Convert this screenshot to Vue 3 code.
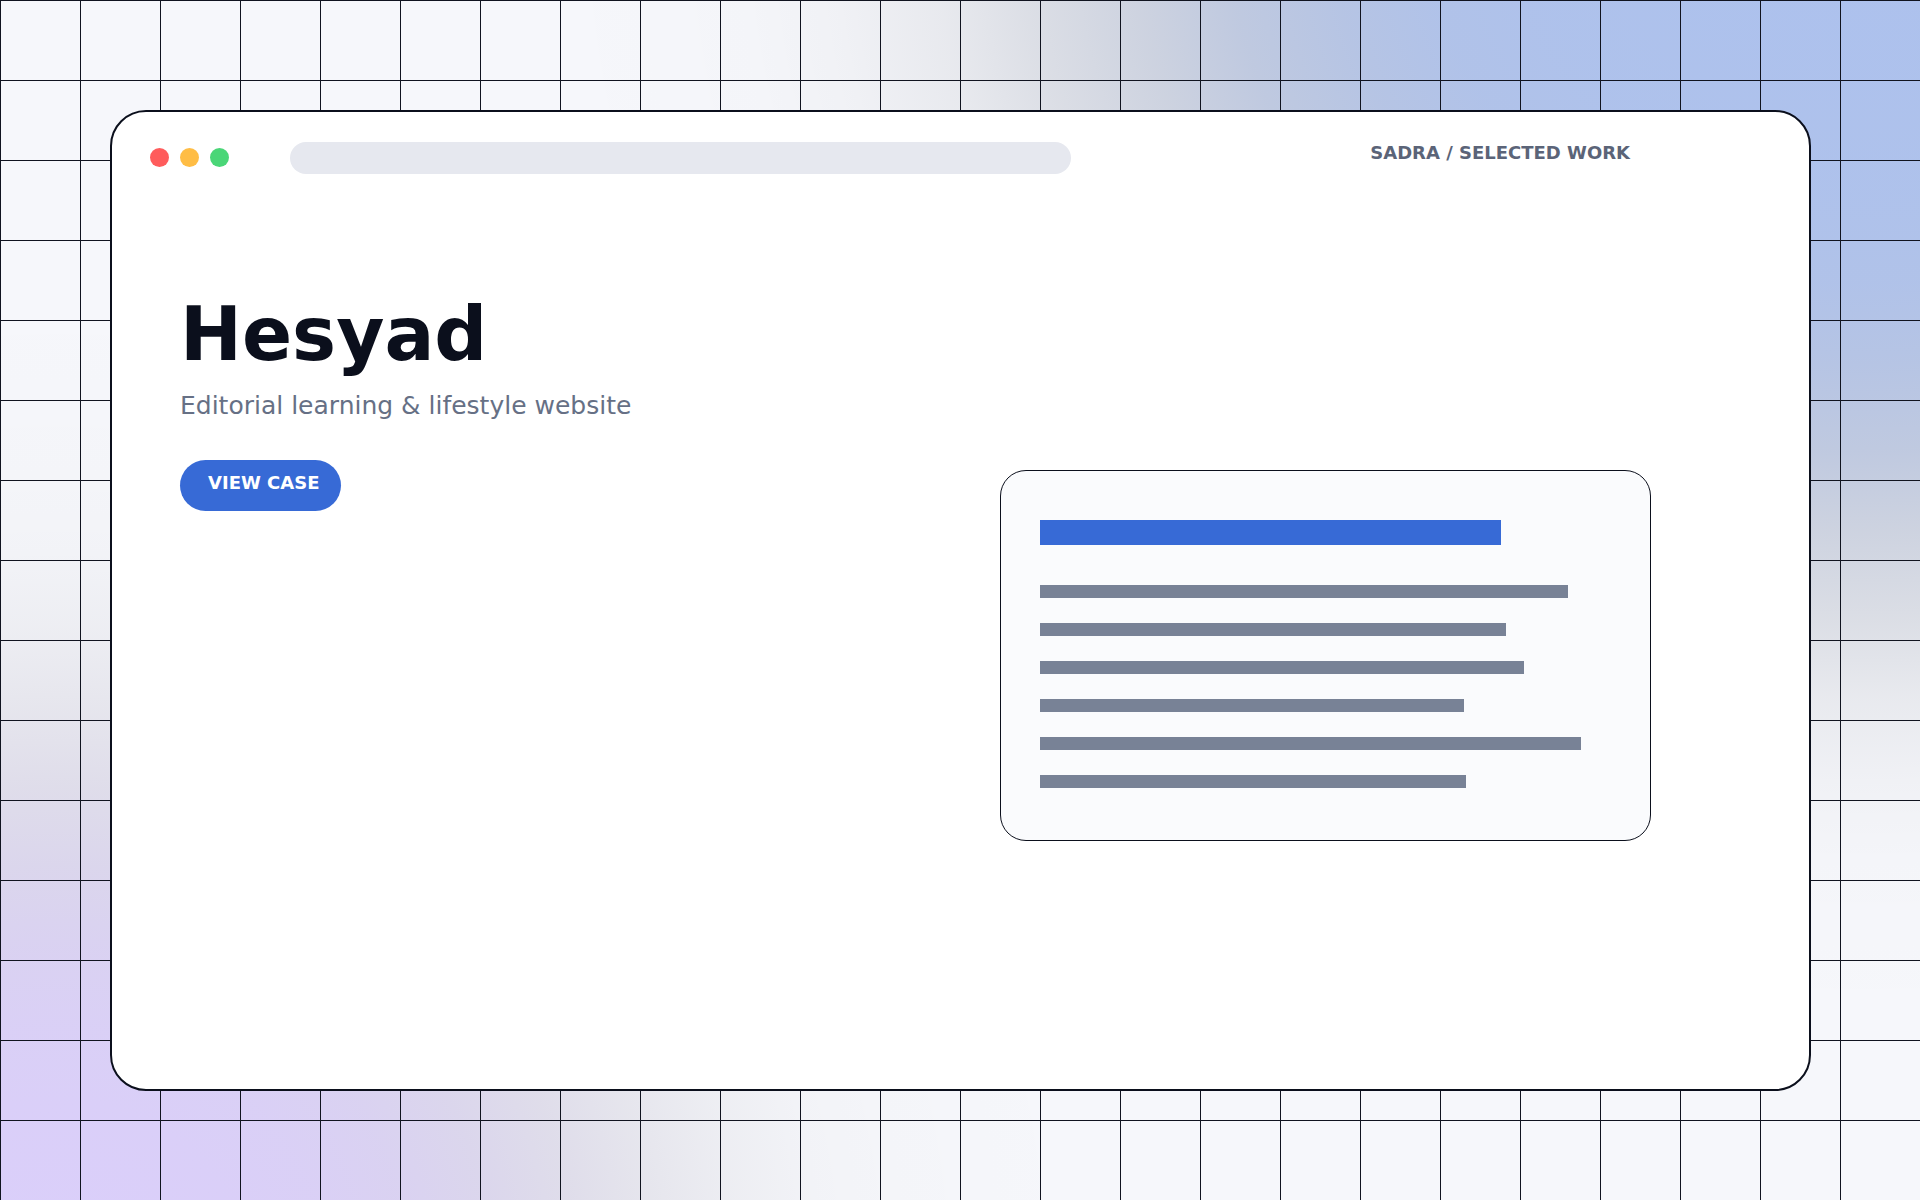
<script setup>
const lights = ['red', 'amber', 'green']
const lines = [528, 466, 484, 424, 541, 426]
</script>

<template>
  <main class="backdrop">
    <section class="window">
      <header class="toolbar">
        <div class="lights">
          <span v-for="light in lights" :key="light" class="light" :class="light"></span>
        </div>
        <div class="address"></div>
        <p class="label">SADRA / SELECTED WORK</p>
      </header>
      <div class="content">
        <div class="copy">
          <h1 class="title">Hesyad</h1>
          <p class="subtitle">Editorial learning &amp; lifestyle website</p>
          <button class="cta" type="button">VIEW CASE</button>
        </div>
        <div class="panel">
          <div class="heading-bar"></div>
          <div
            v-for="(width, index) in lines"
            :key="index"
            class="line"
            :style="{ width: width + 'px' }"
          ></div>
        </div>
      </div>
    </section>
  </main>
</template>

<style>
body {
  margin: 0;
}
</style>

<style scoped>
.backdrop {
  box-sizing: border-box;
  display: flex;
  min-height: 100vh;
  padding: 110px 109px 109px 110px;
  font-family: "DejaVu Sans", sans-serif;
  background-color: #f6f7fb;
  background-image:
    repeating-linear-gradient(to right, #10131f 0 1px, transparent 1px 80px),
    repeating-linear-gradient(to bottom, #10131f 0 1px, transparent 1px 80px),
    radial-gradient(
      ellipse 69% 93% at 97% -7%,
      rgba(55, 106, 214, 0.38) 10%,
      rgba(54, 104, 209, 0.371) 25%,
      rgba(51, 99, 200, 0.355) 33%,
      rgba(46, 89, 180, 0.32) 40%,
      rgba(38, 73, 148, 0.263) 48%,
      rgba(28, 53, 107, 0.19) 55%,
      rgba(17, 33, 66, 0.117) 63%,
      rgba(9, 17, 34, 0.06) 70%,
      rgba(4, 7, 14, 0.025) 78%,
      rgba(1, 2, 5, 0.009) 85%,
      rgba(0, 0, 0, 0) 100%
    ),
    radial-gradient(
      ellipse 54% 83% at 3% 107%,
      rgba(139, 92, 246, 0.26) 9%,
      rgba(136, 90, 240, 0.254) 18%,
      rgba(130, 86, 230, 0.243) 26%,
      rgba(117, 77, 207, 0.219) 34%,
      rgba(96, 64, 170, 0.18) 42%,
      rgba(70, 46, 123, 0.13) 50%,
      rgba(43, 28, 76, 0.08) 58%,
      rgba(22, 15, 39, 0.041) 66%,
      rgba(9, 6, 16, 0.017) 74%,
      rgba(3, 2, 5, 0.006) 82%,
      rgba(0, 0, 0, 0) 100%
    );
}

.window {
  flex: 1;
  min-width: 0;
  border: 2px solid #0b0f1c;
  border-radius: 36px;
  background: #fff;
}

.toolbar {
  display: flex;
  align-items: flex-start;
  padding: 30px 179px 0 38px;
}

.lights {
  display: flex;
  gap: 11px;
  margin: 6px 61px 0 0;
}

.light {
  width: 19px;
  height: 19px;
  border-radius: 50%;
}

.red {
  background: #ff5c5c;
}

.amber {
  background: #ffbd45;
}

.green {
  background: #4ad677;
}

.address {
  flex: 0 1 781px;
  height: 32px;
  border-radius: 16px;
  background: #e6e8ef;
}

.label {
  margin: 0 0 0 auto;
  font-size: 18px;
  font-weight: 700;
  line-height: 22px;
  white-space: nowrap;
  color: #5b6478;
}

.content {
  display: flex;
  align-items: flex-start;
  justify-content: space-between;
  padding: 117px 158px 40px 68px;
}

.title {
  margin: 0 0 14px;
  font-size: 74px;
  font-weight: 700;
  line-height: 86px;
  color: #0b0f1c;
}

.subtitle {
  margin: 0 0 39px;
  font-size: 25px;
  line-height: 30px;
  color: #667085;
}

.cta {
  display: block;
  width: 161px;
  height: 51px;
  padding: 12px 0 17px 28px;
  border: 0;
  border-radius: 26px;
  font-family: inherit;
  font-size: 18px;
  font-weight: 700;
  line-height: 22px;
  text-align: left;
  color: #fff;
  background: #376ad6;
}

.panel {
  box-sizing: border-box;
  flex: 0 0 651px;
  margin-top: 179px;
  padding: 49px 39px 52px;
  border: 1px solid #0b0f1c;
  border-radius: 26px;
  background: #fafbfd;
}

.heading-bar {
  width: 461px;
  height: 25px;
  margin-bottom: 40px;
  background: #376ad6;
}

.line {
  height: 13px;
  background: #788296;
}

.line + .line {
  margin-top: 25px;
}
</style>
